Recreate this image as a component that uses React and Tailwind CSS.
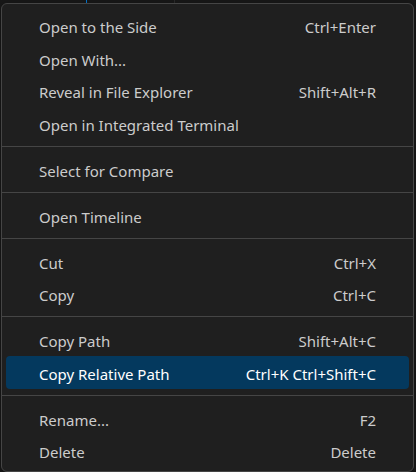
import React from "react";

const items = [
  { label: "Open to the Side", key: "Ctrl+Enter" },
  { label: "Open With...", key: "" },
  { label: "Reveal in File Explorer", key: "Shift+Alt+R" },
  { label: "Open in Integrated Terminal", key: "" },
  { sep: true },
  { label: "Select for Compare", key: "" },
  { sep: true },
  { label: "Open Timeline", key: "" },
  { sep: true },
  { label: "Cut", key: "Ctrl+X" },
  { label: "Copy", key: "Ctrl+C" },
  { sep: true },
  { label: "Copy Path", key: "Shift+Alt+C" },
  { label: "Copy Relative Path", key: "Ctrl+K Ctrl+Shift+C", active: true },
  { sep: true },
  { label: "Rename...", key: "F2" },
  { label: "Delete", key: "Delete" },
];

export default function App() {
  return (
    <div
      className="relative w-[416px] h-[472px] overflow-hidden bg-[#181818]"
      style={{ fontFamily: '"Noto Sans", "Open Sans", sans-serif' }}
    >
      <div className="absolute left-[86px] top-0 h-[3px] w-px bg-[#0078d4]" />
      <div className="absolute left-[174px] top-0 h-[3px] w-px bg-[#2b2b2b]" />
      <div className="absolute left-[1px] top-[3px] w-[413px] rounded-[6px] border border-[#454545] bg-[#1f1f1f] pt-[5.5px] pb-[4px] shadow-[0_2px_8px_rgba(0,0,0,0.36)]">
        {items.map((it, i) =>
          it.sep ? (
            <div key={i} className="mt-[6px] mb-[6.5px] h-px bg-[#454545]" />
          ) : (
            <div
              key={i}
              className={
                it.active
                  ? "mx-[4px] flex h-[32.5px] items-center justify-between rounded-[4px] bg-[#04395e] px-[33px] pt-[3px] text-[15px] text-white"
                  : "mx-[4px] flex h-[32.5px] items-center justify-between rounded-[4px] px-[33px] pt-[3px] text-[15px] text-[#cccccc]"
              }
            >
              <span>{it.label}</span>
              <span>{it.key}</span>
            </div>
          )
        )}
      </div>
    </div>
  );
}
